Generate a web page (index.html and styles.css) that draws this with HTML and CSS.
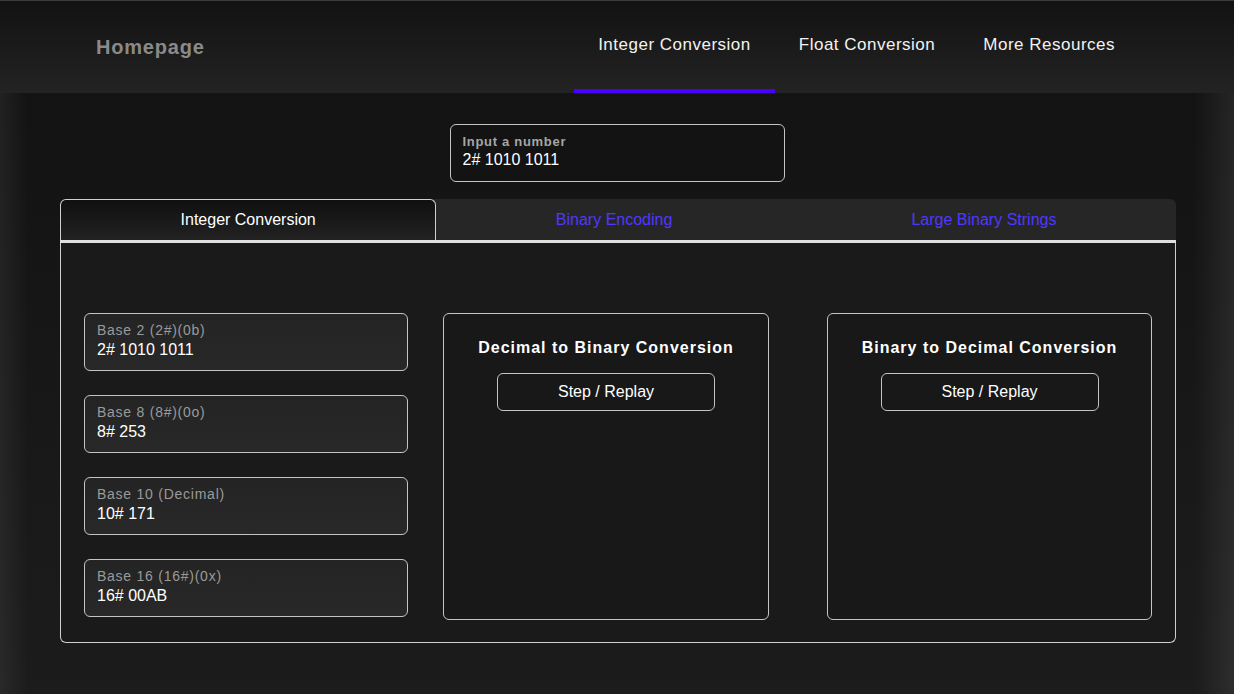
FILE: index.html
```html
<!DOCTYPE html>
<html lang="en">
<head>
<meta charset="utf-8">
<title>Integer Conversion</title>
<link rel="stylesheet" href="styles.css">
</head>
<body>
<nav class="nav">
  <a class="brand" href="#">Homepage</a>
  <div class="links">
    <a class="link active" href="#">Integer Conversion</a>
    <a class="link" href="#">Float Conversion</a>
    <a class="link" href="#">More Resources</a>
  </div>
</nav>
<main class="main">
  <div class="number-input">
    <span class="field-label">Input a number</span>
    <span class="field-value">2# 1010 1011</span>
  </div>
  <section class="tabs">
    <div class="tab-bar">
      <div class="tab active">Integer Conversion</div>
      <div class="tab">Binary Encoding</div>
      <div class="tab">Large Binary Strings</div>
    </div>
    <div class="panel">
      <div class="fields">
        <div class="field"><span class="base-label">Base 2 (2#)(0b)</span><span class="field-value">2# 1010 1011</span></div>
        <div class="field"><span class="base-label">Base 8 (8#)(0o)</span><span class="field-value">8# 253</span></div>
        <div class="field"><span class="base-label">Base 10 (Decimal)</span><span class="field-value">10# 171</span></div>
        <div class="field"><span class="base-label">Base 16 (16#)(0x)</span><span class="field-value">16# 00AB</span></div>
      </div>
      <div class="card card-mid">
        <h3 class="card-title">Decimal to Binary Conversion</h3>
        <button class="step">Step / Replay</button>
      </div>
      <div class="card card-right">
        <h3 class="card-title">Binary to Decimal Conversion</h3>
        <button class="step">Step / Replay</button>
      </div>
    </div>
  </section>
</main>
</body>
</html>
```

FILE: styles.css
```css
* { box-sizing: border-box; }
html, body { margin: 0; padding: 0; }
body {
  font-family: "Liberation Sans", Arial, sans-serif;
  color: #fff;
  background: #1b1b1b;
  min-height: 694px;
}
.nav {
  height: 93px;
  border-top: 1px solid #3a3a3a;
  background: linear-gradient(to bottom, #121212, #232323);
  display: flex;
  justify-content: space-between;
  align-items: stretch;
  padding: 0 95px 0 96px;
}
.brand {
  align-self: center;
  color: #8a8a8a;
  font-weight: bold;
  font-size: 20px;
  letter-spacing: 0.8px;
  text-decoration: none;
}
.links { display: flex; }
.link {
  display: flex;
  align-items: center;
  padding: 0 24px;
  color: #f2f2f2;
  font-size: 17px;
  letter-spacing: 0.5px;
  text-decoration: none;
  border-bottom: 4px solid transparent;
}
.link.active { border-bottom-color: #4a00ff; }
.main {
  padding: 31px 58px 51px 60px;
  background:
    linear-gradient(to right, rgba(255,255,255,0.06), rgba(255,255,255,0) 28px, rgba(255,255,255,0) calc(100% - 40px), rgba(255,255,255,0.08)),
    linear-gradient(to bottom, #131313, #1c1c1c);
  display: flex;
  flex-direction: column;
  align-items: stretch;
}
.number-input {
  align-self: center;
  margin-left: -2px;
  width: 335px;
  height: 58px;
  border: 1px solid #c4c4c4;
  border-radius: 6px;
  background: #131313;
  padding: 8px 12px;
  display: flex;
  flex-direction: column;
}
.field-label {
  color: #a6a6a6;
  font-size: 13px;
  font-weight: bold;
  letter-spacing: 0.7px;
  line-height: 17px;
}
.field-value {
  font-size: 16px;
  line-height: 19px;
  color: #fff;
}
.tabs { margin-top: 17px; }
.tab-bar {
  display: flex;
  height: 44px;
  background: #262626;
  border-radius: 6px 6px 0 0;
  border-bottom: 3px solid #e0e0e0;
}
.tab {
  flex: 1 1 auto;
  display: flex;
  align-items: center;
  justify-content: center;
  font-size: 16px;
  color: #5038ff;
  padding-top: 1px;
}
.tab.active {
  color: #fff;
  border: 1px solid #cfcfcf;
  border-bottom: none;
  border-radius: 6px 6px 0 0;
  background: linear-gradient(to bottom, #101010, #222);
  padding-top: 0;
}
.panel {
  display: flex;
  align-items: flex-start;
  border: 1px solid #cfcfcf;
  border-top: none;
  border-radius: 0 0 6px 6px;
  background: #1a1a1a;
  padding: 70px 23px 22px 23px;
}
.fields {
  width: 324px;
  display: flex;
  flex-direction: column;
  gap: 24px;
}
.field {
  height: 58px;
  border: 1px solid #c4c4c4;
  border-radius: 6px;
  background: linear-gradient(to bottom, #242424, #282828);
  padding: 7px 12px;
  display: flex;
  flex-direction: column;
}
.base-label {
  color: #9a9a9a;
  font-size: 14px;
  letter-spacing: 0.75px;
  line-height: 18px;
}
.field .field-value { margin-top: 1px; }
.card {
  width: 326px;
  height: 307px;
  border: 1px solid #c4c4c4;
  border-radius: 6px;
  background: #181818;
  display: flex;
  flex-direction: column;
  align-items: center;
  padding-top: 24px;
}
.card-mid { margin-left: 35px; }
.card-right { margin-left: 58px; width: 325px; }
.card-title {
  margin: 0;
  font-size: 16px;
  line-height: 20px;
  font-weight: bold;
  letter-spacing: 1px;
  color: #fff;
}
.step {
  margin-top: 15px;
  width: 218px;
  height: 38px;
  border: 1px solid #c4c4c4;
  border-radius: 6px;
  background: transparent;
  color: #fff;
  font-family: "Liberation Sans", Arial, sans-serif;
  font-size: 16px;
}
```
